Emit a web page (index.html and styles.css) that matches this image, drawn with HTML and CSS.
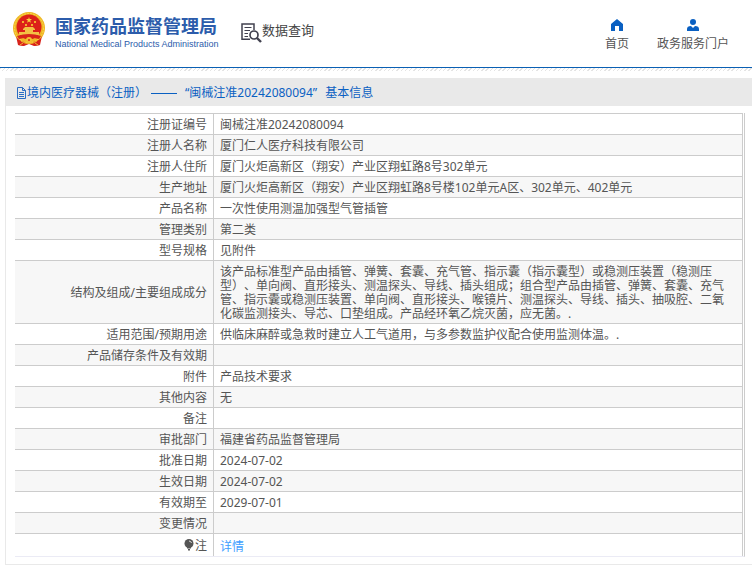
FILE: index.html
```html
<!DOCTYPE html>
<html lang="zh-CN">
<head>
    <meta charset="UTF-8">
    <meta name="viewport" content="width=device-width, initial-scale=1.0">
    <title>国家药品监督管理局 数据查询</title>
    <link rel="stylesheet" href="styles.css">
</head>
<body>
    <header class="header">
        <svg class="emblem" viewBox="0 0 32 35" aria-hidden="true">
            <path d="M6 25 L26 25 L27 33 L21 34 L16 32 L11 34 L5 33 Z" fill="#d8231b"/>
            <circle cx="16" cy="16" r="16" fill="#efb625"/>
            <circle cx="16" cy="16" r="14.5" fill="none" stroke="#f9d84a" stroke-width="1" stroke-dasharray="2 1"/>
            <circle cx="16" cy="15" r="12.5" fill="#dc2019"/>
            <path d="M16 5 L16.7 7.1 L19 7.1 L17.2 8.5 L17.9 10.7 L16 9.4 L14.1 10.7 L14.8 8.5 L13 7.1 L15.3 7.1 Z" fill="#f9d13c"/>
            <path d="M9 9h2v2H9zM21 9h2v2h-2zM12 12h2v2h-2zM18 12h2v2h-2z" fill="#f3ae2c"/>
            <path d="M10 17 L12 15 H20 L22 17 V18 H20 V20 H26 V23 H6 V20 H12 V18 H10 Z" fill="#f3c044"/>
            <path d="M4 24 Q16 20 28 24 L26 27 Q16 24 6 27 Z" fill="#d8231b"/>
            <path d="M3 24 Q5 29 12 30 L11 34 L5 33 Z M29 24 Q27 29 20 30 L21 34 L27 33 Z" fill="#d8231b"/>
            <circle cx="16" cy="28" r="3" fill="#f4bd31"/>
            <circle cx="16" cy="28" r="1" fill="#d8231b"/>
            <path d="M8 29 L12 31 M24 29 L20 31 M7 33 L10 31 M25 33 L22 31" stroke="#f2b52c" stroke-width="1"/>
        </svg>
        <div class="brand">
            <div class="brand-cn">国家药品监督管理局</div>
            <div class="brand-en">National Medical Products Administration</div>
        </div>
        <div class="query">
            <svg class="query-icon" viewBox="0 0 21 20" fill="none" stroke="#41414f" aria-hidden="true">
                <path d="M9 16.2 H1 V1 H13 V7" stroke-width="1.5"/>
                <path d="M3.5 4.5 H10.5 M3.5 7.5 H9 M3.5 10.5 H7 M3.5 13.5 H7" stroke-width="1.2"/>
                <circle cx="13" cy="12" r="4" stroke-width="1.7"/>
                <path d="M16 15 L20 19" stroke-width="2.4"/>
            </svg>
            <span>数据查询</span>
        </div>
        <nav class="nav">
            <a href="#">
                <svg class="nav-icon" viewBox="0 0 14 12" aria-hidden="true">
                    <path d="M7 0 L13 5 V12 H9 V7 H5 V12 H1 V5 Z" fill="#0a60c2"/>
                </svg>
                首页
            </a>
            <a href="#">
                <svg class="nav-icon" viewBox="0 0 14 12" aria-hidden="true">
                    <circle cx="7" cy="3" r="3" fill="#0a60c2"/>
                    <path d="M1 12 V10 Q1 7 5 7 L7 9 L9 7 Q13 7 13 10 V12 Z" fill="#0a60c2"/>
                </svg>
                政务服务门户
            </a>
        </nav>
    </header>

    <main class="panel">
        <h1 class="panel-title">
            <svg class="doc-icon" viewBox="0 0 11 12" fill="none" stroke="#2a6dc4" aria-hidden="true">
                <path d="M1.5 .5 H6.5 L9.5 3.5 V11.5 H1.5 Z M6.5 .5 V3.5 H9.5 M3 5.5 H8 M3 7.5 H8 M3 9.5 H8"/>
            </svg>
            <span>境内医疗器械（注册）</span>
            <span class="dash"></span>
            <span>“闽械注准20242080094”</span>
            <span class="title-end">基本信息</span>
        </h1>
        <div class="panel-body">
            <table class="info">
                <tr><th scope="row">注册证编号</th><td>闽械注准20242080094</td></tr>
                <tr><th scope="row">注册人名称</th><td>厦门仁人医疗科技有限公司</td></tr>
                <tr><th scope="row">注册人住所</th><td>厦门火炬高新区（翔安）产业区翔虹路8号302单元</td></tr>
                <tr><th scope="row">生产地址</th><td>厦门火炬高新区（翔安）产业区翔虹路8号楼102单元A区、302单元、402单元</td></tr>
                <tr><th scope="row">产品名称</th><td>一次性使用测温加强型气管插管</td></tr>
                <tr><th scope="row">管理类别</th><td>第二类</td></tr>
                <tr><th scope="row">型号规格</th><td>见附件</td></tr>
                <tr><th scope="row">结构及组成/主要组成成分</th><td>该产品标准型产品由插管、弹簧、套囊、充气管、指示囊（指示囊型）或稳测压装置（稳测压型）、单向阀、直形接头、测温探头、导线、插头组成；组合型产品由插管、弹簧、套囊、充气管、指示囊或稳测压装置、单向阀、直形接头、喉镜片、测温探头、导线、插头、抽吸腔、二氧化碳监测接头、导芯、口垫组成。产品经环氧乙烷灭菌，应无菌。.</td></tr>
                <tr><th scope="row">适用范围/预期用途</th><td>供临床麻醉或急救时建立人工气道用，与多参数监护仪配合使用监测体温。.</td></tr>
                <tr><th scope="row">产品储存条件及有效期</th><td></td></tr>
                <tr><th scope="row">附件</th><td>产品技术要求</td></tr>
                <tr><th scope="row">其他内容</th><td>无</td></tr>
                <tr><th scope="row">备注</th><td></td></tr>
                <tr><th scope="row">审批部门</th><td>福建省药品监督管理局</td></tr>
                <tr><th scope="row">批准日期</th><td>2024-07-02</td></tr>
                <tr><th scope="row">生效日期</th><td>2024-07-02</td></tr>
                <tr><th scope="row">有效期至</th><td>2029-07-01</td></tr>
                <tr><th scope="row">变更情况</th><td></td></tr>
                <tr class="note">
                    <th scope="row">
                        <svg class="bulb-icon" viewBox="0 0 10 12" aria-hidden="true">
                            <circle cx="5" cy="4.5" r="4.5" fill="#555"/>
                            <path d="M3 8 H7 V9.5 H3 Z M4 10 H6 V11.5 H4 Z" fill="#555"/>
                            <path d="M5 2 Q7 2 7.5 4" fill="none" stroke="#ddd"/>
                        </svg>注
                    </th>
                    <td><a href="#">详情</a></td>
                </tr>
            </table>
        </div>
    </main>
</body>
</html>
```
FILE: styles.css
```css
* {
    margin: 0;
    padding: 0;
    box-sizing: border-box;
}

body {
    font-family: 'Noto Sans', 'Noto Sans CJK SC', sans-serif;
    font-size: 12px;
    line-height: 14px;
    color: #555;
    background: #fff;
    text-spacing-trim: space-all;
}

a {
    color: #409eff;
    text-decoration: none;
}

/* header */
.header {
    display: flex;
    align-items: flex-start;
    height: 71px;
    padding: 12px 23px 0 13px;
    background: repeating-linear-gradient(135deg, #e4e4e4 0 1px, #fff 1px 3px) bottom / 100% 3px no-repeat;
    position: relative;
}

.header::after {
    content: "";
    position: absolute;
    left: 0;
    right: 0;
    bottom: 3px;
    height: 1px;
    background: #0a60b4;
}

.emblem {
    width: 32px;
    height: 35px;
}

.brand {
    width: 160px;
    margin-left: 10px;
    color: #2c5cab;
    white-space: nowrap;
}

.brand-cn {
    font-family: 'Noto Sans CJK SC', sans-serif;
    font-size: 18px;
    line-height: 26px;
    font-weight: bold;
}

.brand-en {
    font-family: 'Liberation Sans', sans-serif;
    font-size: 9px;
    line-height: 12px;
}

.query {
    display: flex;
    margin: 7px 0 0 26px;
    font-family: 'Noto Sans CJK SC', sans-serif;
    font-size: 13px;
    line-height: 22px;
    color: #444;
    white-space: nowrap;
}

.query-icon {
    width: 21px;
    height: 20px;
    margin-top: 4px;
}

.nav {
    display: flex;
    gap: 28px;
    margin-left: auto;
}

.nav a {
    display: flex;
    flex-direction: column;
    align-items: center;
    padding-top: 7px;
    line-height: 26px;
    color: #555;
    white-space: nowrap;
}

.nav-icon {
    width: 14px;
    height: 12px;
}

/* detail panel */
.panel {
    margin: 7px 0 0 5px;
    border-left: 1px solid #e9e9e9;
    border-bottom: 1px solid #e9e9e9;
}

.panel-title {
    display: flex;
    align-items: center;
    height: 28px;
    padding: 2px 0 0 10px;
    font-size: 12px;
    font-weight: normal;
    color: #0a60c2;
    background: #e9e9e9;
    white-space: nowrap;
}

.doc-icon {
    width: 11px;
    height: 12px;
}

.dash {
    width: 26px;
    height: 1px;
    margin: 0 8px 0 4px;
    background: #0a60c2;
}

.title-end {
    margin-left: 8px;
}

.panel-body {
    padding: 7px 7px 7px 9px;
}

.info {
    width: 100%;
    border-collapse: separate;
    border-spacing: 0;
    border-right: 1px solid #ccc;
    border-bottom: 1px solid #ebebf5;
    padding-right: 1px;
    background: #fff;
}

.info th,
.info td {
    border-top: 1px solid #ccc;
    border-right: 1px solid #ccc;
    font-weight: normal;
    vertical-align: middle;
}

.info th {
    width: 199px;
    padding: 4px 6px 2px 0;
    text-align: right;
}

.info td {
    height: 21px;
    padding: 4px 8px 2px 6px;
}

.info tr:nth-child(even) {
    background: #f7f7f7;
}

.info .note td {
    height: 23px;
    padding-top: 6px;
}

.bulb-icon {
    width: 10px;
    height: 12px;
    margin-right: 1px;
    vertical-align: -1px;
}
```
